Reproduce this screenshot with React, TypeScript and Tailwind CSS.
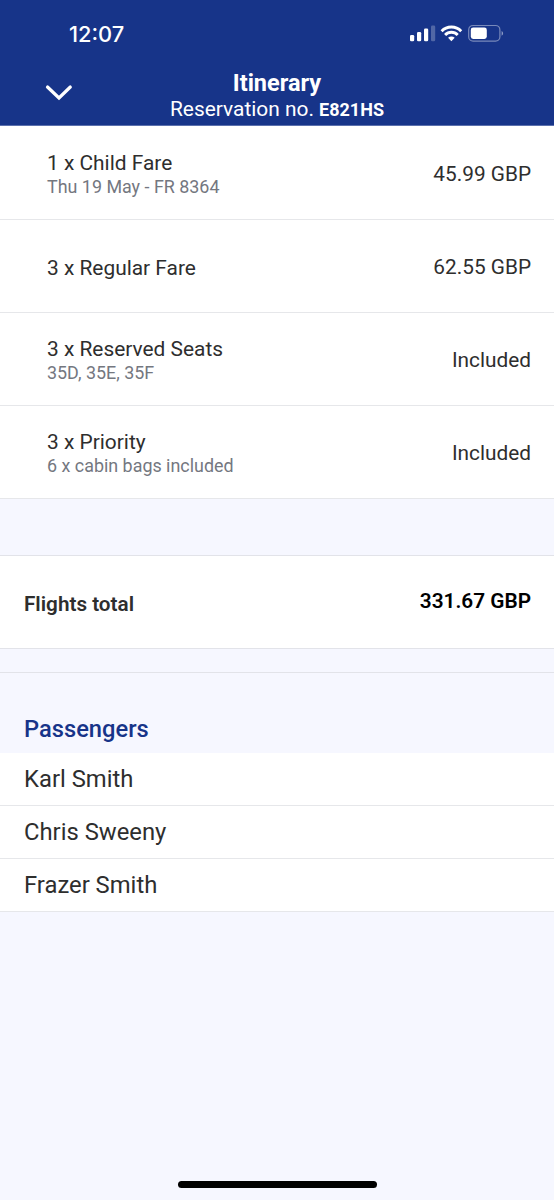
type Fare = { title: string; detail?: string; amount: string };

const fares: Fare[] = [
  { title: "1 x Child Fare", detail: "Thu 19 May - FR 8364", amount: "45.99 GBP" },
  { title: "3 x Regular Fare", amount: "62.55 GBP" },
  { title: "3 x Reserved Seats", detail: "35D, 35E, 35F", amount: "Included" },
  { title: "3 x Priority", detail: "6 x cabin bags included", amount: "Included" },
];

const passengers = ["Karl Smith", "Chris Sweeny", "Frazer Smith"];

function StatusIcons() {
  return (
    <svg width="96" height="20" viewBox="0 0 96 20" fill="none" aria-hidden="true">
      <g fill="#fff">
        <rect x="1" y="12" width="4.2" height="6.2" rx="1.3" />
        <rect x="8" y="9" width="4.2" height="9.2" rx="1.3" />
        <rect x="15" y="5.5" width="4.2" height="12.7" rx="1.3" />
        <rect x="22" y="2.5" width="4.2" height="15.7" rx="1.3" opacity="0.25" />
      </g>
      <g stroke="#fff" strokeWidth="2.9">
        <path d="M32.6 8.2a13.6 13.6 0 0 1 19.6 0" />
        <path d="M36.1 12a8.7 8.7 0 0 1 12.6 0" />
      </g>
      <path d="M42.4 18.2l-3.3-3.4a4.7 4.7 0 0 1 6.6 0z" fill="#fff" />
      <rect x="59.7" y="2.5" width="31.2" height="15.6" rx="4.4" stroke="#fff" strokeOpacity="0.42" strokeWidth="1.2" />
      <rect x="61.8" y="4.6" width="16" height="11.4" rx="2.4" fill="#fff" />
      <path d="M92.6 8c2 .9 2 3.8 0 4.7z" fill="#fff" opacity="0.5" />
    </svg>
  );
}

function Header() {
  return (
    <header className="flex h-[126px] shrink-0 flex-col border-b border-[#5b70ad] bg-[#173489] text-white">
      <div className="flex h-[66px] items-start justify-between pt-[22px] pr-[49px] pl-[69px]">
        <span className="font-['Inter',sans-serif] text-[21.8px] leading-6 font-medium">12:07</span>
        <div className="pt-px">
          <StatusIcons />
        </div>
      </div>
      <div className="grid grid-cols-[118px_1fr_118px]">
        <svg className="mt-[17px] ml-[44px]" width="30" height="20" viewBox="0 0 30 20" fill="none" aria-hidden="true">
          <path d="M3.5 4L15 15L26.3 4" stroke="#fff" strokeWidth="3.2" strokeLinecap="round" />
        </svg>
        <div className="flex flex-col items-center whitespace-nowrap pt-[3px]">
          <h1 className="text-[23.5px] leading-7 font-bold">Itinerary</h1>
          <p className="text-[20.9px] leading-6">
            Reservation no. <b className="text-[18px] font-bold">E821HS</b>
          </p>
        </div>
      </div>
    </header>
  );
}

function FareRow({ title, detail, amount }: Fare) {
  return (
    <li className="flex h-[93px] items-start justify-between border-b border-[#e6e7ea] bg-white pr-[23px] pl-[47px]">
      <div className={detail ? "pt-[25px]" : "pt-[37px]"}>
        <p className="text-[20.9px] leading-[23px]">{title}</p>
        {detail && <p className="text-[17.9px] leading-6 text-[#74777f]">{detail}</p>}
      </div>
      <p className="pt-[35px] text-[20.8px] leading-6">{amount}</p>
    </li>
  );
}

export default function App() {
  return (
    <main className="flex h-[1200px] w-[554px] flex-col overflow-hidden bg-[#f6f7ff] font-['Roboto',sans-serif] text-[#2e2e2e]">
      <Header />
      <ul className="bg-white pt-px">
        {fares.map((fare) => (
          <FareRow key={fare.title} {...fare} />
        ))}
      </ul>
      <section className="mt-[56px] flex h-[94px] items-start justify-between border-y border-[#e2e3e9] bg-white pr-[23px] pl-6">
        <h2 className="pt-9 text-[20.7px] leading-6 font-semibold">Flights total</h2>
        <p className="pt-[33px] text-[20.8px] leading-6 font-semibold text-black">331.67 GBP</p>
      </section>
      <section className="mt-[23px] border-t border-[#e2e3e9]">
        <h2 className="h-[80px] pt-[41px] pl-6 text-[23.7px] leading-[30px] font-medium text-[#173489]">Passengers</h2>
        <ul>
          {passengers.map((name) => (
            <li key={name} className="h-[53px] border-b border-[#e6e7ea] bg-white pt-[11px] pl-6 text-[23.8px] leading-[30px]">
              {name}
            </li>
          ))}
        </ul>
      </section>
      <div className="mt-auto mb-3 ml-[178px] h-[7px] w-[199px] rounded-full bg-black" />
    </main>
  );
}
